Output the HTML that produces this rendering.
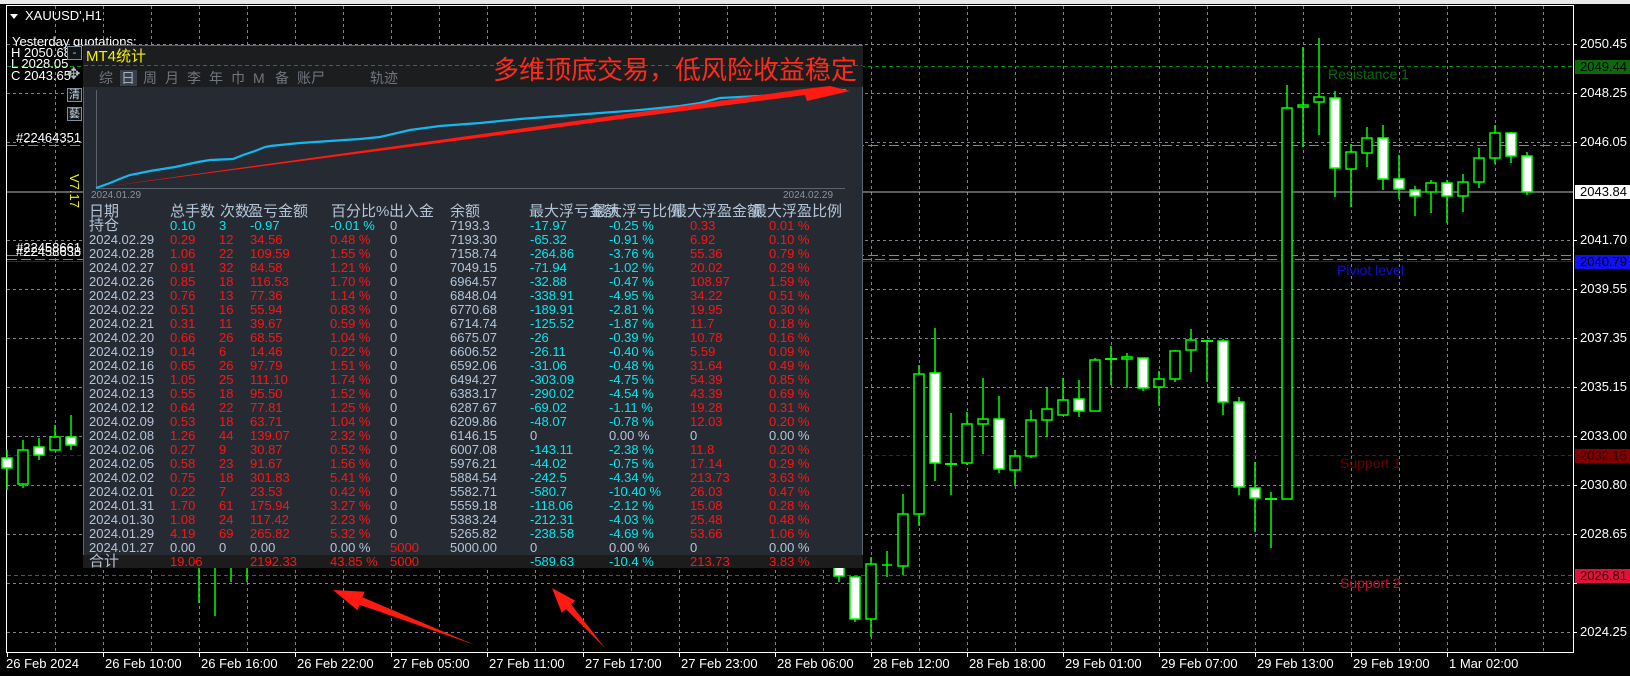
<!DOCTYPE html>
<html><head><meta charset="utf-8">
<style>
*{margin:0;padding:0;box-sizing:border-box}
body{width:1630px;height:676px;background:#000;position:relative;overflow:hidden;font-family:"Liberation Sans","Noto Sans CJK SC",sans-serif;font-size:13px;color:#fff}
.a{position:absolute;white-space:nowrap;line-height:14px}
#panel{position:absolute;left:83px;top:45px;width:780px;height:523px;background:#262b33;border:1px solid #5a6470}
.tb{position:absolute;left:83px;width:780px}
table{position:absolute;left:89px;border-collapse:collapse;table-layout:fixed;font-size:13px;line-height:14px}
td{height:14px;padding:0;white-space:nowrap;overflow:visible;color:#b4c4d8}
.r{color:#ff1414}.c{color:#00e8f0}
.hd{position:absolute;top:204px;font-size:15px;line-height:16px;color:#b4c4d8;font-family:"Liberation Sans","Noto Sans CJK SC",sans-serif}
.btn{position:absolute;left:67px;width:15px;height:14px;border:1px solid #8090a0;color:#c8d4e0;font-size:11px;line-height:12px;text-align:center;background:#10151a}
.tab{position:absolute;top:70px;font-size:14px;line-height:16px;color:#70767e}
</style></head><body>
<div style="position:absolute;left:0;top:0;width:1630px;height:4px;background:#e8e8e8"></div>
<svg width="1630" height="676" style="position:absolute;left:0;top:0">
<rect x="6.5" y="5.5" width="1567" height="647" fill="none" stroke="#fff" stroke-width="1"/>
<g stroke="#7a8290" stroke-dasharray="3,3" stroke-width="1">
<line x1="7" y1="44.5" x2="1573" y2="44.5"/><line x1="7" y1="93.5" x2="1573" y2="93.5"/><line x1="7" y1="142.5" x2="1573" y2="142.5"/><line x1="7" y1="240.5" x2="1573" y2="240.5"/><line x1="7" y1="289.5" x2="1573" y2="289.5"/><line x1="7" y1="338.5" x2="1573" y2="338.5"/><line x1="7" y1="387.5" x2="1573" y2="387.5"/><line x1="7" y1="436.5" x2="1573" y2="436.5"/><line x1="7" y1="485.5" x2="1573" y2="485.5"/><line x1="7" y1="534.5" x2="1573" y2="534.5"/><line x1="7" y1="583.5" x2="1573" y2="583.5"/><line x1="7" y1="632.5" x2="1573" y2="632.5"/>
<line x1="55.5" y1="6" x2="55.5" y2="652"/><line x1="103.5" y1="6" x2="103.5" y2="652"/><line x1="151.5" y1="6" x2="151.5" y2="652"/><line x1="199.5" y1="6" x2="199.5" y2="652"/><line x1="247.5" y1="6" x2="247.5" y2="652"/><line x1="295.5" y1="6" x2="295.5" y2="652"/><line x1="343.5" y1="6" x2="343.5" y2="652"/><line x1="391.5" y1="6" x2="391.5" y2="652"/><line x1="439.5" y1="6" x2="439.5" y2="652"/><line x1="487.5" y1="6" x2="487.5" y2="652"/><line x1="535.5" y1="6" x2="535.5" y2="652"/><line x1="583.5" y1="6" x2="583.5" y2="652"/><line x1="631.5" y1="6" x2="631.5" y2="652"/><line x1="679.5" y1="6" x2="679.5" y2="652"/><line x1="727.5" y1="6" x2="727.5" y2="652"/><line x1="775.5" y1="6" x2="775.5" y2="652"/><line x1="823.5" y1="6" x2="823.5" y2="652"/><line x1="871.5" y1="6" x2="871.5" y2="652"/><line x1="919.5" y1="6" x2="919.5" y2="652"/><line x1="967.5" y1="6" x2="967.5" y2="652"/><line x1="1015.5" y1="6" x2="1015.5" y2="652"/><line x1="1063.5" y1="6" x2="1063.5" y2="652"/><line x1="1111.5" y1="6" x2="1111.5" y2="652"/><line x1="1159.5" y1="6" x2="1159.5" y2="652"/><line x1="1207.5" y1="6" x2="1207.5" y2="652"/><line x1="1255.5" y1="6" x2="1255.5" y2="652"/><line x1="1303.5" y1="6" x2="1303.5" y2="652"/><line x1="1351.5" y1="6" x2="1351.5" y2="652"/><line x1="1399.5" y1="6" x2="1399.5" y2="652"/><line x1="1447.5" y1="6" x2="1447.5" y2="652"/><line x1="1495.5" y1="6" x2="1495.5" y2="652"/><line x1="1543.5" y1="6" x2="1543.5" y2="652"/>
</g>
<line x1="7" y1="192" x2="1573" y2="192" stroke="#b8bcc4" stroke-width="1"/>
<g stroke-width="1" fill="none">
<line x1="7" y1="66.5" x2="1573" y2="66.5" stroke="#0a8a0a" stroke-dasharray="4,3"/>
<line x1="7" y1="145.5" x2="1573" y2="145.5" stroke="#22cc22" stroke-dasharray="10,4,3,4"/>
<line x1="7" y1="255.5" x2="1573" y2="255.5" stroke="#22cc22" stroke-dasharray="10,4,3,4"/>
<line x1="7" y1="259.5" x2="1573" y2="259.5" stroke="#22cc22" stroke-dasharray="10,4"/>
<line x1="7" y1="261.5" x2="1573" y2="261.5" stroke="#1010e0"/>
<line x1="7" y1="455.5" x2="1573" y2="455.5" stroke="#8b0000" stroke-dasharray="4,3"/>
<line x1="7" y1="575.5" x2="1573" y2="575.5" stroke="#dc143c" stroke-dasharray="4,3"/>
</g>
<g stroke="#00ff00" stroke-width="1.5">
<line x1="7" y1="450" x2="7" y2="490"/><rect x="2" y="458" width="10" height="10" fill="#fff"/>
<line x1="23" y1="440" x2="23" y2="488"/><rect x="18" y="450" width="10" height="34" fill="#000"/>
<line x1="39" y1="438" x2="39" y2="460"/><rect x="34" y="447" width="10" height="8" fill="#fff"/>
<line x1="55" y1="425" x2="55" y2="450"/><rect x="50" y="437" width="10" height="13" fill="#000"/>
<line x1="71" y1="415" x2="71" y2="450"/><rect x="66" y="437" width="10" height="8" fill="#fff"/>
<line x1="199" y1="568" x2="199" y2="603"/><line x1="215" y1="568" x2="215" y2="616"/><line x1="231" y1="568" x2="231" y2="582"/><line x1="247" y1="568" x2="247" y2="582"/>
<line x1="839" y1="566" x2="839" y2="582"/><rect x="834" y="566" width="10" height="10" fill="#fff"/>
<line x1="855" y1="577" x2="855" y2="622"/><rect x="850" y="577" width="10" height="42" fill="#fff"/>
<line x1="871" y1="557" x2="871" y2="637"/><rect x="866" y="564" width="10" height="55" fill="#000"/>
<line x1="887" y1="551" x2="887" y2="577"/><line x1="882" y1="565" x2="892" y2="565"/>
<line x1="903" y1="494" x2="903" y2="575"/><rect x="898" y="514" width="10" height="52" fill="#000"/>
<line x1="919" y1="365" x2="919" y2="526"/><rect x="914" y="374" width="10" height="140" fill="#000"/>
<line x1="935" y1="328" x2="935" y2="481"/><rect x="930" y="373" width="10" height="90" fill="#fff"/>
<line x1="951" y1="413" x2="951" y2="495"/><line x1="945" y1="464" x2="957" y2="464" stroke-width="2"/>
<line x1="967" y1="412" x2="967" y2="465"/><rect x="962" y="424" width="10" height="39" fill="#000"/>
<line x1="983" y1="378" x2="983" y2="454"/><rect x="978" y="419" width="10" height="5" fill="#000"/>
<line x1="999" y1="396" x2="999" y2="473"/><rect x="994" y="419" width="10" height="50" fill="#fff"/>
<line x1="1015" y1="450" x2="1015" y2="486"/><rect x="1010" y="456" width="10" height="14" fill="#000"/>
<line x1="1031" y1="410" x2="1031" y2="458"/><rect x="1026" y="420" width="10" height="36" fill="#000"/>
<line x1="1047" y1="387" x2="1047" y2="437"/><rect x="1042" y="409" width="10" height="11" fill="#000"/>
<line x1="1063" y1="378" x2="1063" y2="416"/><rect x="1058" y="400" width="10" height="15" fill="#000"/>
<line x1="1079" y1="380" x2="1079" y2="417"/><rect x="1074" y="399" width="10" height="12" fill="#fff"/>
<line x1="1095" y1="358" x2="1095" y2="411"/><rect x="1090" y="360" width="10" height="51" fill="#000"/>
<line x1="1111" y1="346" x2="1111" y2="385"/><line x1="1105" y1="359" x2="1117" y2="359" stroke-width="2"/>
<line x1="1127" y1="353" x2="1127" y2="388"/><rect x="1122" y="357" width="10" height="2" fill="#000"/>
<line x1="1143" y1="358" x2="1143" y2="391"/><rect x="1138" y="358" width="10" height="30" fill="#fff"/>
<line x1="1159" y1="371" x2="1159" y2="406"/><rect x="1154" y="379" width="10" height="8" fill="#000"/>
<line x1="1175" y1="350" x2="1175" y2="382"/><rect x="1170" y="351" width="10" height="28" fill="#000"/>
<line x1="1191" y1="329" x2="1191" y2="372"/><rect x="1186" y="340" width="10" height="10" fill="#000"/>
<line x1="1207" y1="340" x2="1207" y2="382"/><line x1="1201" y1="341" x2="1213" y2="341" stroke-width="2"/>
<line x1="1223" y1="339" x2="1223" y2="415"/><rect x="1218" y="341" width="10" height="61" fill="#fff"/>
<line x1="1239" y1="397" x2="1239" y2="495"/><rect x="1234" y="402" width="10" height="85" fill="#fff"/>
<line x1="1255" y1="462" x2="1255" y2="532"/><rect x="1250" y="488" width="10" height="10" fill="#fff"/>
<line x1="1271" y1="492" x2="1271" y2="548"/><line x1="1265" y1="499" x2="1277" y2="499" stroke-width="2"/>
<line x1="1287" y1="85" x2="1287" y2="108"/><rect x="1282" y="108" width="10" height="391" fill="#000"/>
<line x1="1303" y1="47" x2="1303" y2="147"/><rect x="1298" y="105" width="10" height="2" fill="#000"/>
<line x1="1319" y1="38" x2="1319" y2="135"/><rect x="1314" y="97" width="10" height="5" fill="#000"/>
<line x1="1335" y1="91" x2="1335" y2="197"/><rect x="1330" y="98" width="10" height="70" fill="#fff"/>
<line x1="1351" y1="144" x2="1351" y2="207"/><rect x="1346" y="152" width="10" height="17" fill="#000"/>
<line x1="1367" y1="127" x2="1367" y2="167"/><rect x="1362" y="138" width="10" height="15" fill="#000"/>
<line x1="1383" y1="125" x2="1383" y2="190"/><rect x="1378" y="138" width="10" height="41" fill="#fff"/>
<line x1="1399" y1="155" x2="1399" y2="199"/><rect x="1394" y="179" width="10" height="10" fill="#fff"/>
<line x1="1415" y1="186" x2="1415" y2="216"/><rect x="1410" y="190" width="10" height="6" fill="#fff"/>
<line x1="1431" y1="180" x2="1431" y2="213"/><rect x="1426" y="183" width="10" height="9" fill="#000"/>
<line x1="1447" y1="180" x2="1447" y2="223"/><rect x="1442" y="183" width="10" height="13" fill="#fff"/>
<line x1="1463" y1="174" x2="1463" y2="212"/><rect x="1458" y="182" width="10" height="14" fill="#000"/>
<line x1="1479" y1="148" x2="1479" y2="188"/><rect x="1474" y="158" width="10" height="24" fill="#000"/>
<line x1="1495" y1="125" x2="1495" y2="164"/><rect x="1490" y="133" width="10" height="25" fill="#000"/>
<line x1="1511" y1="132" x2="1511" y2="163"/><rect x="1506" y="133" width="10" height="23" fill="#fff"/>
<line x1="1527" y1="152" x2="1527" y2="195"/><rect x="1522" y="156" width="10" height="36" fill="#fff"/>
</g>
<g stroke="#fff" stroke-width="1">
<line x1="1573" y1="44.5" x2="1577" y2="44.5"/><line x1="1573" y1="93.5" x2="1577" y2="93.5"/><line x1="1573" y1="142.5" x2="1577" y2="142.5"/><line x1="1573" y1="240.5" x2="1577" y2="240.5"/><line x1="1573" y1="289.5" x2="1577" y2="289.5"/><line x1="1573" y1="338.5" x2="1577" y2="338.5"/><line x1="1573" y1="387.5" x2="1577" y2="387.5"/><line x1="1573" y1="436.5" x2="1577" y2="436.5"/><line x1="1573" y1="485.5" x2="1577" y2="485.5"/><line x1="1573" y1="534.5" x2="1577" y2="534.5"/><line x1="1573" y1="583.5" x2="1577" y2="583.5"/><line x1="1573" y1="632.5" x2="1577" y2="632.5"/>
<line x1="7.5" y1="652" x2="7.5" y2="657"/><line x1="103.5" y1="652" x2="103.5" y2="657"/><line x1="199.5" y1="652" x2="199.5" y2="657"/><line x1="295.5" y1="652" x2="295.5" y2="657"/><line x1="391.5" y1="652" x2="391.5" y2="657"/><line x1="487.5" y1="652" x2="487.5" y2="657"/><line x1="583.5" y1="652" x2="583.5" y2="657"/><line x1="679.5" y1="652" x2="679.5" y2="657"/><line x1="775.5" y1="652" x2="775.5" y2="657"/><line x1="871.5" y1="652" x2="871.5" y2="657"/><line x1="967.5" y1="652" x2="967.5" y2="657"/><line x1="1063.5" y1="652" x2="1063.5" y2="657"/><line x1="1159.5" y1="652" x2="1159.5" y2="657"/><line x1="1255.5" y1="652" x2="1255.5" y2="657"/><line x1="1351.5" y1="652" x2="1351.5" y2="657"/><line x1="1447.5" y1="652" x2="1447.5" y2="657"/>
</g>
<polygon points="10,14 18,14 14,19" fill="#fff"/>
</svg>

<div class="a" style="left:25px;top:9px">XAUUSD',H1</div>
<div class="a" style="left:12px;top:35px">Yesterday quotations:</div>
<div class="a" style="left:11px;top:46px">H 2050.68</div>
<div class="a" style="left:11px;top:57px">L 2028.05</div>
<div class="a" style="left:11px;top:69px">C 2043.65</div>
<div class="a" style="left:16px;top:131px">#22464351</div>
<div class="a" style="left:16px;top:241px">#22458661</div>
<div class="a" style="left:16px;top:245px">#22458638</div>
<div class="a" style="left:67px;top:174px;writing-mode:vertical-rl;color:#f0f000;font-size:13px">V7.17</div>
<div class="btn" style="top:46px">-</div>
<div class="a" style="left:67px;top:68px;font-size:16px;color:#b0bcc8">✥</div>
<div class="btn" style="top:88px">清</div>
<div class="btn" style="top:107px">藝</div>

<div class="a" style="left:1328px;top:67px;color:#0a6a0a;font-size:14px">Resistance 1</div>
<div class="a" style="left:1337px;top:263px;color:#1010d0;font-size:14px">Piviot level</div>
<div class="a" style="left:1340px;top:456px;color:#6a0000;font-size:14px">Support 1</div>
<div class="a" style="left:1340px;top:576px;color:#c01030;font-size:14px">Support 2</div>

<div class="a" style="left:1580px;top:37px">2050.45</div>
<div class="a" style="left:1575px;top:60px;width:55px;height:14px;background:#0a6a0a;color:#000;padding-left:5px">2049.44</div>
<div class="a" style="left:1580px;top:86px">2048.25</div>
<div class="a" style="left:1580px;top:135px">2046.05</div>
<div class="a" style="left:1575px;top:185px;width:55px;height:14px;background:#fff;color:#000;padding-left:5px">2043.84</div>
<div class="a" style="left:1580px;top:233px">2041.70</div>
<div class="a" style="left:1575px;top:255px;width:55px;height:14px;background:#1010f0;color:#000;padding-left:5px">2040.79</div>
<div class="a" style="left:1580px;top:282px">2039.55</div>
<div class="a" style="left:1580px;top:331px">2037.35</div>
<div class="a" style="left:1580px;top:380px">2035.15</div>
<div class="a" style="left:1580px;top:429px">2033.00</div>
<div class="a" style="left:1575px;top:449px;width:55px;height:14px;background:#800000;color:#200;padding-left:5px">2032.15</div>
<div class="a" style="left:1580px;top:478px">2030.80</div>
<div class="a" style="left:1580px;top:527px">2028.65</div>
<div class="a" style="left:1575px;top:569px;width:55px;height:14px;background:#dc143c;color:#300;padding-left:5px">2026.81</div>
<div class="a" style="left:1580px;top:625px">2024.25</div>

<div class="a" style="left:6px;top:657px">26 Feb 2024</div>
<div class="a" style="left:105px;top:657px">26 Feb 10:00</div>
<div class="a" style="left:201px;top:657px">26 Feb 16:00</div>
<div class="a" style="left:297px;top:657px">26 Feb 22:00</div>
<div class="a" style="left:393px;top:657px">27 Feb 05:00</div>
<div class="a" style="left:489px;top:657px">27 Feb 11:00</div>
<div class="a" style="left:585px;top:657px">27 Feb 17:00</div>
<div class="a" style="left:681px;top:657px">27 Feb 23:00</div>
<div class="a" style="left:777px;top:657px">28 Feb 06:00</div>
<div class="a" style="left:873px;top:657px">28 Feb 12:00</div>
<div class="a" style="left:969px;top:657px">28 Feb 18:00</div>
<div class="a" style="left:1065px;top:657px">29 Feb 01:00</div>
<div class="a" style="left:1161px;top:657px">29 Feb 07:00</div>
<div class="a" style="left:1257px;top:657px">29 Feb 13:00</div>
<div class="a" style="left:1353px;top:657px">29 Feb 19:00</div>
<div class="a" style="left:1449px;top:657px">1 Mar 02:00</div>

<div id="panel"></div>
<div class="tb" style="top:46px;height:41px;background:#1c1d1f"></div>
<svg width="1630" height="676" style="position:absolute;left:0;top:0">
<line x1="84" y1="65.5" x2="862" y2="65.5" stroke="#0a8a0a" stroke-dasharray="4,3"/>
<rect x="120" y="70" width="17" height="16" fill="#383f4a"/>
<line x1="96.5" y1="90" x2="96.5" y2="188" stroke="#5a626c"/>
<line x1="96" y1="188.5" x2="845" y2="188.5" stroke="#5a626c"/>
<polyline fill="none" stroke="#12b8f0" stroke-width="2.2" points="96,188 110,183 122,178 130,175 150,171 175,167 198,162 210,160 233,159 243,155 255,151 265,147 270,146 300,143 330,141 360,139 380,137 410,130 440,126 480,123 520,119 560,116 600,113 640,110 680,106 700,103 720,98 760,96 800,93 846,90"/>
<polygon points="96,188 805,95 807,101 850,91 830,86 804,89" fill="#ff1a12"/>
</svg>
<div class="a" style="left:86px;top:49px;color:#f4f400;font-size:15px;line-height:16px">MT4统计</div>
<div class="a" style="left:493px;top:55px;color:#ff2a1a;font-size:26px;line-height:30px">多维顶底交易，低风险收益稳定</div>
<div class="tab" style="left:99px">综</div>
<div class="tab" style="left:121px;color:#a8b0ba">日</div>
<div class="tab" style="left:143px">周</div>
<div class="tab" style="left:165px">月</div>
<div class="tab" style="left:187px">李</div>
<div class="tab" style="left:209px">年</div>
<div class="tab" style="left:231px">巾</div>
<div class="tab" style="left:253px">M</div>
<div class="tab" style="left:275px">备</div>
<div class="tab" style="left:297px">账尸</div>
<div class="tab" style="left:370px">轨迹</div>
<div class="a" style="left:91px;top:189px;color:#8a929c;font-size:10px">2024.01.29</div>
<div class="a" style="left:783px;top:189px;color:#8a929c;font-size:10px">2024.02.29</div>

<div class="hd" style="left:89px">日期</div>
<div class="hd" style="left:170px">总手数</div>
<div class="hd" style="left:220px">次数</div>
<div class="hd" style="left:248px">盈亏金额</div>
<div class="hd" style="left:331px">百分比%</div>
<div class="hd" style="left:389px">出入金</div>
<div class="hd" style="left:450px">余额</div>
<div class="hd" style="left:529px">最大浮亏金额</div>
<div class="hd" style="left:592px">最大浮亏比例</div>
<div class="hd" style="left:672px">最大浮盈金额</div>
<div class="hd" style="left:752px">最大浮盈比例</div>

<div class="tb" style="top:555px;height:13px;background:#1c1c1c"></div>
<table style="top:219px">
<colgroup><col style="width:81px"><col style="width:49px"><col style="width:31px"><col style="width:80px"><col style="width:60px"><col style="width:60px"><col style="width:80px"><col style="width:79px"><col style="width:81px"><col style="width:79px"><col style="width:60px"></colgroup>
<tr><td style="font-size:15px">持仓</td><td class="c">0.10</td><td class="c">3</td><td class="c">-0.97</td><td class="c">-0.01 %</td><td>0</td><td>7193.3</td><td class="c">-17.97</td><td class="c">-0.25 %</td><td class="r">0.33</td><td class="r">0.01 %</td></tr>
<tr><td>2024.02.29</td><td class="r">0.29</td><td class="r">12</td><td class="r">34.56</td><td class="r">0.48 %</td><td>0</td><td>7193.30</td><td class="c">-65.32</td><td class="c">-0.91 %</td><td class="r">6.92</td><td class="r">0.10 %</td></tr>
<tr><td>2024.02.28</td><td class="r">1.06</td><td class="r">22</td><td class="r">109.59</td><td class="r">1.55 %</td><td>0</td><td>7158.74</td><td class="c">-264.86</td><td class="c">-3.76 %</td><td class="r">55.36</td><td class="r">0.79 %</td></tr>
<tr><td>2024.02.27</td><td class="r">0.91</td><td class="r">32</td><td class="r">84.58</td><td class="r">1.21 %</td><td>0</td><td>7049.15</td><td class="c">-71.94</td><td class="c">-1.02 %</td><td class="r">20.02</td><td class="r">0.29 %</td></tr>
<tr><td>2024.02.26</td><td class="r">0.85</td><td class="r">18</td><td class="r">116.53</td><td class="r">1.70 %</td><td>0</td><td>6964.57</td><td class="c">-32.88</td><td class="c">-0.47 %</td><td class="r">108.97</td><td class="r">1.59 %</td></tr>
<tr><td>2024.02.23</td><td class="r">0.76</td><td class="r">13</td><td class="r">77.36</td><td class="r">1.14 %</td><td>0</td><td>6848.04</td><td class="c">-338.91</td><td class="c">-4.95 %</td><td class="r">34.22</td><td class="r">0.51 %</td></tr>
<tr><td>2024.02.22</td><td class="r">0.51</td><td class="r">16</td><td class="r">55.94</td><td class="r">0.83 %</td><td>0</td><td>6770.68</td><td class="c">-189.91</td><td class="c">-2.81 %</td><td class="r">19.95</td><td class="r">0.30 %</td></tr>
<tr><td>2024.02.21</td><td class="r">0.31</td><td class="r">11</td><td class="r">39.67</td><td class="r">0.59 %</td><td>0</td><td>6714.74</td><td class="c">-125.52</td><td class="c">-1.87 %</td><td class="r">11.7</td><td class="r">0.18 %</td></tr>
<tr><td>2024.02.20</td><td class="r">0.66</td><td class="r">26</td><td class="r">68.55</td><td class="r">1.04 %</td><td>0</td><td>6675.07</td><td class="c">-26</td><td class="c">-0.39 %</td><td class="r">10.78</td><td class="r">0.16 %</td></tr>
<tr><td>2024.02.19</td><td class="r">0.14</td><td class="r">6</td><td class="r">14.46</td><td class="r">0.22 %</td><td>0</td><td>6606.52</td><td class="c">-26.11</td><td class="c">-0.40 %</td><td class="r">5.59</td><td class="r">0.09 %</td></tr>
<tr><td>2024.02.16</td><td class="r">0.65</td><td class="r">26</td><td class="r">97.79</td><td class="r">1.51 %</td><td>0</td><td>6592.06</td><td class="c">-31.06</td><td class="c">-0.48 %</td><td class="r">31.64</td><td class="r">0.49 %</td></tr>
<tr><td>2024.02.15</td><td class="r">1.05</td><td class="r">25</td><td class="r">111.10</td><td class="r">1.74 %</td><td>0</td><td>6494.27</td><td class="c">-303.09</td><td class="c">-4.75 %</td><td class="r">54.39</td><td class="r">0.85 %</td></tr>
<tr><td>2024.02.13</td><td class="r">0.55</td><td class="r">18</td><td class="r">95.50</td><td class="r">1.52 %</td><td>0</td><td>6383.17</td><td class="c">-290.02</td><td class="c">-4.54 %</td><td class="r">43.39</td><td class="r">0.69 %</td></tr>
<tr><td>2024.02.12</td><td class="r">0.64</td><td class="r">22</td><td class="r">77.81</td><td class="r">1.25 %</td><td>0</td><td>6287.67</td><td class="c">-69.02</td><td class="c">-1.11 %</td><td class="r">19.28</td><td class="r">0.31 %</td></tr>
<tr><td>2024.02.09</td><td class="r">0.53</td><td class="r">18</td><td class="r">63.71</td><td class="r">1.04 %</td><td>0</td><td>6209.86</td><td class="c">-48.07</td><td class="c">-0.78 %</td><td class="r">12.03</td><td class="r">0.20 %</td></tr>
<tr><td>2024.02.08</td><td class="r">1.26</td><td class="r">44</td><td class="r">139.07</td><td class="r">2.32 %</td><td>0</td><td>6146.15</td><td>0</td><td>0.00 %</td><td>0</td><td>0.00 %</td></tr>
<tr><td>2024.02.06</td><td class="r">0.27</td><td class="r">9</td><td class="r">30.87</td><td class="r">0.52 %</td><td>0</td><td>6007.08</td><td class="c">-143.11</td><td class="c">-2.38 %</td><td class="r">11.8</td><td class="r">0.20 %</td></tr>
<tr><td>2024.02.05</td><td class="r">0.58</td><td class="r">23</td><td class="r">91.67</td><td class="r">1.56 %</td><td>0</td><td>5976.21</td><td class="c">-44.02</td><td class="c">-0.75 %</td><td class="r">17.14</td><td class="r">0.29 %</td></tr>
<tr><td>2024.02.02</td><td class="r">0.75</td><td class="r">18</td><td class="r">301.83</td><td class="r">5.41 %</td><td>0</td><td>5884.54</td><td class="c">-242.5</td><td class="c">-4.34 %</td><td class="r">213.73</td><td class="r">3.63 %</td></tr>
<tr><td>2024.02.01</td><td class="r">0.22</td><td class="r">7</td><td class="r">23.53</td><td class="r">0.42 %</td><td>0</td><td>5582.71</td><td class="c">-580.7</td><td class="c">-10.40 %</td><td class="r">26.03</td><td class="r">0.47 %</td></tr>
<tr><td>2024.01.31</td><td class="r">1.70</td><td class="r">61</td><td class="r">175.94</td><td class="r">3.27 %</td><td>0</td><td>5559.18</td><td class="c">-118.06</td><td class="c">-2.12 %</td><td class="r">15.08</td><td class="r">0.28 %</td></tr>
<tr><td>2024.01.30</td><td class="r">1.08</td><td class="r">24</td><td class="r">117.42</td><td class="r">2.23 %</td><td>0</td><td>5383.24</td><td class="c">-212.31</td><td class="c">-4.03 %</td><td class="r">25.48</td><td class="r">0.48 %</td></tr>
<tr><td>2024.01.29</td><td class="r">4.19</td><td class="r">69</td><td class="r">265.82</td><td class="r">5.32 %</td><td>0</td><td>5265.82</td><td class="c">-238.58</td><td class="c">-4.69 %</td><td class="r">53.66</td><td class="r">1.06 %</td></tr>
<tr><td>2024.01.27</td><td>0.00</td><td>0</td><td>0.00</td><td>0.00 %</td><td class="r">5000</td><td>5000.00</td><td>0</td><td>0.00 %</td><td>0</td><td>0.00 %</td></tr>
<tr><td style="font-size:15px">合计</td><td class="r">19.06</td><td></td><td class="r">2192.33</td><td class="r">43.85 %</td><td class="r">5000</td><td></td><td class="c">-589.63</td><td class="c">-10.4 %</td><td class="r">213.73</td><td class="r">3.83 %</td></tr>
</table>

<svg width="1630" height="676" style="position:absolute;left:0;top:0">
<polygon points="333,590 364.6,591.7 362.4,597.3 475,645 359.6,604.7 357.4,610.3" fill="#ff1a12"/>
<polygon points="552,588 575.3,600.7 571.1,604.4 605,648 565.9,609 561.7,612.7" fill="#ff1a12"/>
</svg>
</body></html>
